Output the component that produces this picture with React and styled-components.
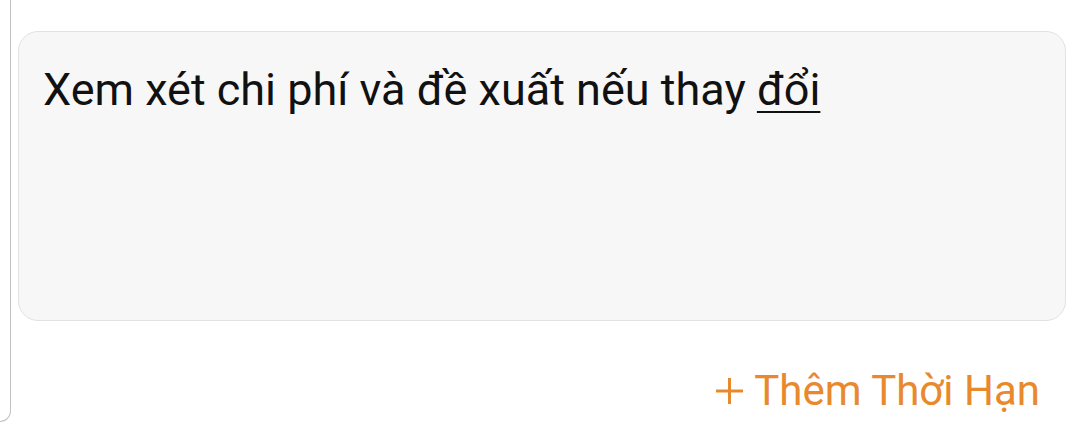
import styled, { createGlobalStyle } from "styled-components";

const Global = createGlobalStyle`
  html, body {
    margin: 0;
    padding: 0;
    background: #ffffff;
    font-family: Roboto, "Noto Sans", sans-serif;
  }
`;

const Page = styled.div`
  width: 1080px;
  height: 436px;
  display: flex;
  overflow: hidden;
`;

const PrevCard = styled.div`
  flex: 0 0 11px;
  height: 434px;
  margin-top: -12px;
  border: 1.5px solid #c2c2c2;
  border-left: none;
  border-radius: 0 14px 14px 0;
  box-sizing: border-box;
`;

const Column = styled.div`
  flex: 1;
  display: flex;
  flex-direction: column;
  padding: 31px 14px 0 7px;
`;

const NoteBox = styled.div`
  height: 290px;
  box-sizing: border-box;
  background: #f7f7f7;
  border: 1.5px solid #e2e2e2;
  border-radius: 20px;
  padding: 32px 24px;
  font-size: 45px;
  line-height: 52px;
  color: #111111;
`;

const Marked = styled.span`
  text-decoration: underline;
  text-decoration-thickness: 2px;
  text-underline-offset: 6px;
`;

const Actions = styled.div`
  display: flex;
  justify-content: flex-end;
  padding: 48px 26px 0 0;
`;

const AddButton = styled.button`
  all: unset;
  display: flex;
  align-items: center;
  gap: 11px;
  font-family: Roboto, "Noto Sans", sans-serif;
  font-size: 42px;
  line-height: 44px;
  color: #e8892e;
  cursor: pointer;
`;

export default function App() {
  return (
    <Page>
      <Global />
      <PrevCard />
      <Column>
        <NoteBox>
          Xem xét chi phí và đề xuất nếu thay <Marked>đổi</Marked>
        </NoteBox>
        <Actions>
          <AddButton>
            <svg width="27" height="28" viewBox="0 0 27 28">
              <path d="M13.5 1v26M0 14h27" stroke="#e8892e" strokeWidth="3" />
            </svg>
            Thêm Thời Hạn
          </AddButton>
        </Actions>
      </Column>
    </Page>
  );
}
